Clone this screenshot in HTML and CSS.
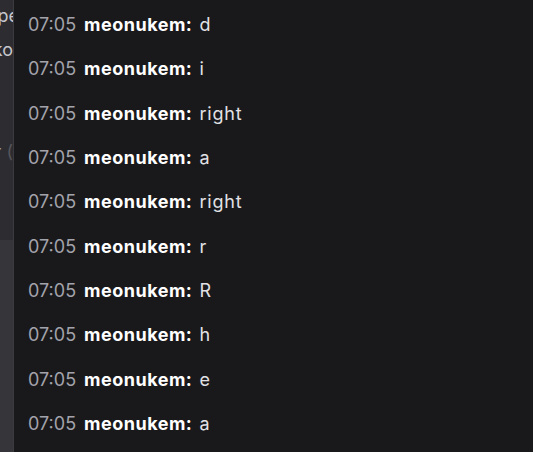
FILE: index.html
```html
<!DOCTYPE html>
<html>
<head>
<meta charset="utf-8">
<link rel="stylesheet" href="styles.css">
</head>
<body>
<div class="app">
  <aside class="side">
    <div class="side-top">
      <div class="side-line l1"><span class="cut">Ope</span></div>
      <div class="side-line l2"><span>Nako</span></div>
      <div class="side-line l3"><span class="dim">r</span><span class="dimmer">&nbsp;(</span></div>
    </div>
    <div class="side-bottom"></div>
  </aside>
  <main class="chat">
    <div class="msg"><span class="time">07:05</span><span class="user">meonukem:</span> <span class="text">d</span></div>
    <div class="msg"><span class="time">07:05</span><span class="user">meonukem:</span> <span class="text">i</span></div>
    <div class="msg"><span class="time">07:05</span><span class="user">meonukem:</span> <span class="text">right</span></div>
    <div class="msg"><span class="time">07:05</span><span class="user">meonukem:</span> <span class="text">a</span></div>
    <div class="msg"><span class="time">07:05</span><span class="user">meonukem:</span> <span class="text">right</span></div>
    <div class="msg"><span class="time">07:05</span><span class="user">meonukem:</span> <span class="text">r</span></div>
    <div class="msg"><span class="time">07:05</span><span class="user">meonukem:</span> <span class="text">R</span></div>
    <div class="msg"><span class="time">07:05</span><span class="user">meonukem:</span> <span class="text">h</span></div>
    <div class="msg"><span class="time">07:05</span><span class="user">meonukem:</span> <span class="text">e</span></div>
    <div class="msg"><span class="time">07:05</span><span class="user">meonukem:</span> <span class="text">a</span></div>
  </main>
</div>
</body>
</html>
```
FILE: styles.css
```css
* { box-sizing: border-box; }
html, body {
  margin: 0;
  padding: 0;
  height: 100%;
  background: #19191b;
  font-family: Inter, "Noto Sans", sans-serif;
  overflow: hidden;
}
.app {
  display: flex;
  height: 452px;
}
.side {
  width: 14px;
  flex: none;
  display: flex;
  flex-direction: column;
  border-right: 1px solid #3a3a3f;
  background: #2c2c31;
}
.side-top {
  height: 240px;
  display: flex;
  flex-direction: column;
  overflow: hidden;
  background: #2c2c31;
  font-size: 18px;
  color: #c6c6cc;
}
.side-bottom {
  flex: 1;
  background: #35353a;
}
.side-line {
  display: flex;
  justify-content: flex-end;
  white-space: nowrap;
  line-height: 22px;
}
.cut { margin-right: -6px; }
.l1 { margin-top: 5px; }
.l2 { margin-top: 12px; }
.l3 { margin-top: 80px; }
.dim { color: #9c9ca2; }
.dimmer { color: #55555a; }
.chat {
  flex: 1;
  padding: 3px 0 0 14px;
  font-size: 18px;
}
.msg {
  height: 44.33px;
  line-height: 44.33px;
  white-space: nowrap;
  color: #dcdce0;
}
.time { color: #a3a3ab; margin-right: 8px; }
.user { color: #ffffff; font-weight: 700; letter-spacing: 0.5px; }
.text { color: #e2e2e6; letter-spacing: 0.8px; margin-left: 2px; }
```
